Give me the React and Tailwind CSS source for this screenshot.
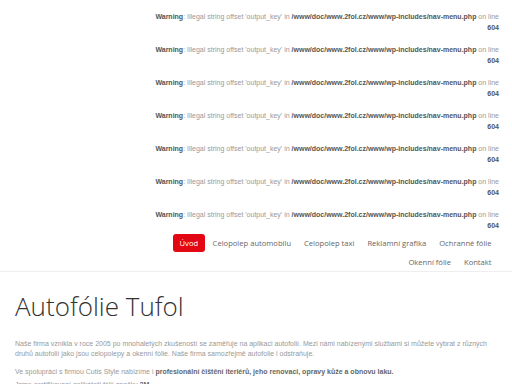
import React from "react";

const navItems = [
    "Celopolep automobilu",
    "Celopolep taxi",
    "Reklamní grafika",
    "Ochranné fólie",
];

const Warning = () => (
    <div className="pt-[11px] text-right">
        <div>
            <b className="text-[#555]">Warning</b>: Illegal string offset 'output_key' in{" "}
            <b className="text-[#555]">/www/doc/www.2fol.cz/www/wp-includes/nav-menu.php</b> on line
        </div>
        <div>
            <b className="text-[#555]">604</b>
        </div>
    </div>
);

const App = () => {
    return (
        <div className="min-h-screen bg-white overflow-hidden">
            {/* PHP warnings */}
            <div
                className="pr-[13px] text-[7px] leading-[11px] text-[#999]"
                style={{ fontFamily: '"Liberation Sans", Arial, sans-serif' }}
            >
                {Array.from({ length: 7 }).map((_, i) => (
                    <Warning key={i} />
                ))}
            </div>

            {/* Header nav */}
            <header
                className="border-b border-[#eee] pt-[3px] pr-[14px]"
                style={{ fontFamily: '"Open Sans", sans-serif' }}
            >
                <nav className="flex flex-wrap justify-end text-[7.6px] text-[#666] leading-[18px]">
                    <a className="px-[6.5px] mr-[1.5px] bg-[#e30613] text-white rounded-[3px]">Úvod</a>
                    {navItems.map(item => (
                        <a key={item} className="px-[6.5px]">{item}</a>
                    ))}
                    <div className="basis-full h-[1px]" />
                    <a className="px-[6.5px]">Okenní fólie</a>
                    <a className="px-[6.5px]">Kontakt</a>
                </nav>
            </header>

            {/* Content */}
            <main className="px-[15px] pt-[14px]">
                <h1
                    className="text-[26px] font-light text-[#333] leading-[40px]"
                    style={{ fontFamily: '"Open Sans", sans-serif' }}
                >
                    Autofólie Tufol
                </h1>
                <div
                    className="mt-[13px] text-[7px] text-[#999]"
                    style={{ fontFamily: '"Liberation Sans", Arial, sans-serif' }}
                >
                    <p className="leading-[10px] mb-[8px]">
                        Naše firma vznikla v roce 2005 po mnohaletých zkušeností se zaměřuje na aplikaci autofolií. Mezi námi nabízenými službami si můžete vybrat z různých druhů autofolií jako jsou celopolepy a okenní fólie. Naše firma samozřejmě autofolie i odstraňuje.
                    </p>
                    <p className="leading-[10px] mb-[3px]">
                        Ve spolupráci s firmou Cutis Style nabízíme i{" "}
                        <b className="text-[#666]">profesionální čištění iteriérů, jeho renovaci, opravy kůže a obnovu laku.</b>
                    </p>
                    <p className="leading-[10px]">
                        Jsme certifikovaní aplikátoři fólií značky <b className="text-[#666]">3M</b>
                    </p>
                </div>
            </main>
        </div>
    );
};

export default App;
